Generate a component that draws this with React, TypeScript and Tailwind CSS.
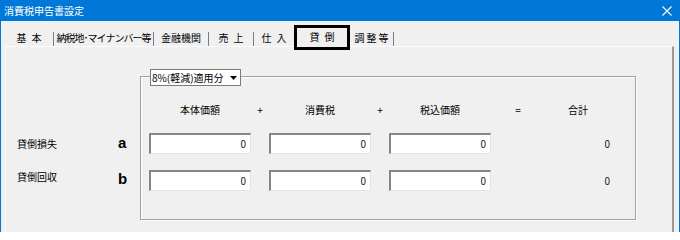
const tabs = [
  { label: "基\u2002本", w: "w-[49px]", sep: true, tight: false },
  { label: "納税地･マイナンバー等", w: "w-[100px]", sep: true, tight: true },
  { label: "金融機関", w: "w-[55px]", sep: true, tight: false },
  { label: "売\u2002上", w: "w-[45px]", sep: true, tight: false },
  { label: "仕\u2002入", w: "w-[40px]", sep: false, tight: false },
];

function NumBox({ value }: { value: string }) {
  return (
    <div className="flex h-[21px] w-[102px] items-center justify-end border-t-2 border-l-2 border-r border-b border-t-[#858585] border-l-[#858585] border-r-[#e3e3e3] border-b-[#e3e3e3] bg-white pr-[4px] text-[10px] leading-none text-[#1a1a1a]">
      {value}
    </div>
  );
}

const rows = [
  { name: "貸倒損失", mark: "a", labelShift: "mt-0", markShift: "-mt-[2px]" },
  { name: "貸倒回収", mark: "b", labelShift: "-mt-[8px]", markShift: "-mt-[4px]" },
];

export default function App() {
  return (
    <div className="h-[232px] w-[680px] overflow-hidden border-x border-[#0078d7] bg-[#f0f0f0] font-['Noto_Sans_CJK_JP','Noto_Sans',sans-serif] text-black">
      {/* title bar */}
      <div className="flex h-[21px] items-center justify-between bg-[#0078d7] pl-[3px] pr-[7px]">
        <span className="text-[10px] leading-none text-white">消費税申告書設定</span>
        <svg width="10" height="10" viewBox="0 0 10 10" className="text-white">
          <path d="M0.5 0.5 L9.5 9.5 M9.5 0.5 L0.5 9.5" stroke="currentColor" strokeWidth="1.1" />
        </svg>
      </div>

      {/* tabs */}
      <div className="ml-[4px] flex h-[25px] items-end">
        {tabs.map((t) => (
          <div key={t.label} className={`flex h-[16px] items-center ${t.w}`}>
            <span
              className={`flex-1 text-center text-[10px] leading-none whitespace-nowrap ${t.tight ? "tracking-[-1px]" : ""}`}
            >
              {t.label}
            </span>
            {t.sep ? <span className="h-[14px] w-px self-end bg-[#7d7d7d]" /> : null}
          </div>
        ))}
        <div className="relative z-10 -mb-[4px] flex h-[25px] w-[56px] items-center justify-center border-[3px] border-black bg-[#f0f0f0] pb-[2px]">
          <span className="text-[10px] leading-none">貸{"\u2002"}倒</span>
        </div>
        <div className="flex h-[16px] w-[44px] items-center">
          <span className="flex-1 text-center text-[10px] leading-none whitespace-nowrap">調{"\u2009"}整{"\u2009"}等</span>
          <span className="h-[14px] w-px self-end bg-[#7d7d7d]" />
        </div>
      </div>

      {/* tab panel */}
      <div className="ml-[4px] flex h-[200px] w-[669px] border-t border-r-2 border-l border-t-[#fcfcfc] border-r-[#9a9a9a] border-l-[#fafafa] pl-[11px] pt-[29px]">
        <div className="w-[123px] shrink-0">
          {rows.map((r, i) => (
            <div key={r.name} className={`flex h-[21px] items-center ${i === 0 ? "mt-[57px]" : "mt-[16px]"}`}>
              <span className={`w-[101px] text-[10px] leading-[14px] ${r.labelShift}`}>{r.name}</span>
              <span className={`font-['Liberation_Sans',sans-serif] text-[15px] leading-none font-bold ${r.markShift}`}>{r.mark}</span>
            </div>
          ))}
        </div>

        <div className="relative h-[144px] w-[496px] border border-[#a0a0a0] pl-[8px] pt-[26px] shadow-[1px_1px_0_#ffffff,inset_1px_1px_0_#ffffff]">
          <div className="absolute top-[-8px] left-[9px] flex h-[17px] w-[91px] items-center border border-[#7a7a7a] bg-white">
            <span className="flex-1 pl-[1px] text-[10px] leading-none whitespace-nowrap">8%(軽減)適用分</span>
            <span className="flex h-full w-[13px] items-center justify-center">
              <svg width="7" height="4" viewBox="0 0 7 4">
                <path d="M0 0 H7 L3.5 4 Z" fill="#000" />
              </svg>
            </span>
          </div>

          <div className="grid grid-cols-[102px_18px_102px_18px_102px_54px_66px] text-[10px] leading-[14px]">
            <span className="text-center">本体価額</span>
            <span className="text-center">+</span>
            <span className="text-center">消費税</span>
            <span className="text-center">+</span>
            <span className="text-center">税込価額</span>
            <span className="text-center">=</span>
            <span className="text-center">合計</span>
          </div>

          {rows.map((r) => (
            <div key={r.mark} className="mt-[16px] grid grid-cols-[102px_18px_102px_18px_102px_54px_66px] items-center">
              <NumBox value="0" />
              <span />
              <NumBox value="0" />
              <span />
              <NumBox value="0" />
              <span />
              <span className="pr-[1px] text-right text-[10px] leading-none text-[#1a1a1a]">0</span>
            </div>
          ))}
        </div>
      </div>
    </div>
  );
}
